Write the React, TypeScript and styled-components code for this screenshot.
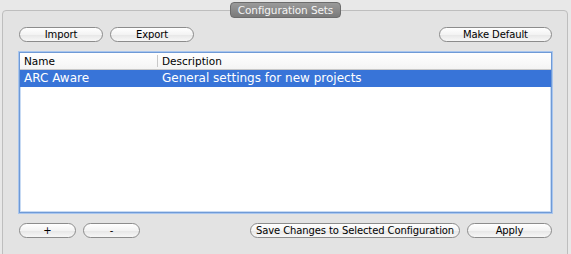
import styled, {createGlobalStyle} from 'styled-components';

const GlobalStyle = createGlobalStyle`
  html, body {
    margin: 0;
    padding: 0;
    background: #e8e8e8;
    font-family: 'DejaVu Sans', 'Liberation Sans', sans-serif;
    color: #000;
  }
`;

const Page = styled.div`
  width: 571px;
  height: 254px;
  padding: 10px 3px 0 2px;
  box-sizing: border-box;
  overflow: hidden;
`;

const GroupBox = styled.div`
  position: relative;
  height: 260px;
  border: 1px solid #bebebe;
  border-radius: 4px;
  background: #e3e3e3;
  box-sizing: border-box;
  padding: 16px 15px 0 16px;
`;

const Tab = styled.div`
  position: absolute;
  top: -9px;
  left: 227px;
  width: 111px;
  height: 16px;
  box-sizing: border-box;
  border-radius: 4px;
  border: 1px solid #6c6c6c;
  background: linear-gradient(#9a9a9a, #7a7a7a);
  color: #f4f4f4;
  font-size: 10.5px;
  line-height: 14px;
  text-align: center;
  letter-spacing: -0.1px;
`;

const Toolbar = styled.div`
  display: flex;
  align-items: center;
  gap: 7px;
  height: 15px;
`;

const Spacer = styled.div`
  flex: 1;
`;

const Button = styled.button<{$w: number}>`
  width: ${p => p.$w}px;
  height: 15px;
  box-sizing: border-box;
  padding: 0;
  border: 1px solid #8c8c8c;
  border-radius: 8px;
  background: linear-gradient(#ffffff 0%, #f3f3f3 50%, #e6e6e6 51%, #f7f7f7 100%);
  font-family: 'DejaVu Sans', 'Liberation Sans', sans-serif;
  font-size: 10px;
  line-height: 13px;
  color: #000;
  letter-spacing: -0.1px;
  white-space: nowrap;
  overflow: hidden;
`;

const Table = styled.div`
  margin-top: 10px;
  height: 161px;
  box-sizing: border-box;
  border: 1px solid #6f9ad6;
  box-shadow: 0 0 0 1px #a9c6ee, inset 0 0 0 1px #c7daf3;
  background: #fff;
  display: flex;
  flex-direction: column;
`;

const HeaderRow = styled.div`
  display: grid;
  grid-template-columns: 137px 1fr;
  height: 16px;
  border-bottom: 1px solid #c8c8c8;
  background: linear-gradient(#ffffff, #f4f4f4);
  font-size: 10.5px;
  line-height: 16px;
`;

const HeaderCell = styled.div<{$divider?: boolean}>`
  padding-left: 4px;
  border-left: ${p => (p.$divider ? '1px solid #c8c8c8' : 'none')};
  margin: ${p => (p.$divider ? '2px 0' : '0')};
  line-height: ${p => (p.$divider ? '12px' : '16px')};
`;

const Row = styled.div<{$selected?: boolean}>`
  display: grid;
  grid-template-columns: 138px 1fr;
  height: 17px;
  background: ${p => (p.$selected ? '#3874d8' : 'transparent')};
  color: ${p => (p.$selected ? '#fff' : '#000')};
  font-size: 12px;
  line-height: 17px;
`;

const Cell = styled.div`
  padding-left: 4px;
  white-space: nowrap;
`;

const BottomBar = styled(Toolbar)`
  margin-top: 10px;
`;

export default function App() {
  return (
    <Page>
      <GlobalStyle />
      <GroupBox>
        <Tab>Configuration Sets</Tab>
        <Toolbar>
          <Button $w={84}>Import</Button>
          <Button $w={84}>Export</Button>
          <Spacer />
          <Button $w={113}>Make Default</Button>
        </Toolbar>
        <Table>
          <HeaderRow>
            <HeaderCell>Name</HeaderCell>
            <HeaderCell $divider>Description</HeaderCell>
          </HeaderRow>
          <Row $selected>
            <Cell>ARC Aware</Cell>
            <Cell>General settings for new projects</Cell>
          </Row>
        </Table>
        <BottomBar>
          <Button $w={57}>+</Button>
          <Button $w={57}>-</Button>
          <Spacer />
          <Button $w={210}>Save Changes to Selected Configuration</Button>
          <Button $w={85}>Apply</Button>
        </BottomBar>
      </GroupBox>
    </Page>
  );
}
